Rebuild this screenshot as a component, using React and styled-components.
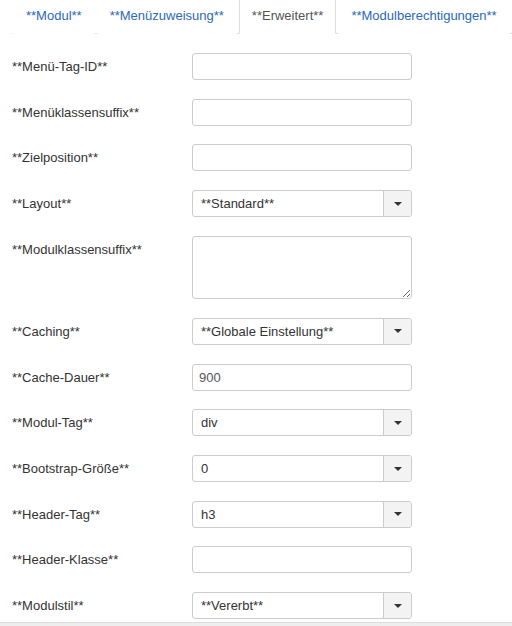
import React from "react";
import styled, { createGlobalStyle } from "styled-components";

const Global = createGlobalStyle`
  html, body {
    margin: 0;
    padding: 0;
    background: #fff;
    font-family: "Liberation Sans", Arial, sans-serif;
    font-size: 13px;
    color: #333;
    overflow: hidden;
  }
`;

const Page = styled.div`
  width: 512px;
  height: 626px;
  display: flex;
  flex-direction: column;
`;

const Tabs = styled.ul`
  display: flex;
  margin: 0 0 0 12px;
  padding: 0 0 0 1px;
  list-style: none;
  border-bottom: 1px solid #ddd;
  height: 33px;
  box-sizing: content-box;
`;

const Tab = styled.li`
  display: flex;
  align-items: center;
  padding: 0 12px 3px;
  margin-right: 2px;
  margin-bottom: -1px;
  height: 34px;
  box-sizing: border-box;
  color: ${(p) => (p.active ? "#555" : "#2a69b8")};
  background: #fff;
  border: 1px solid ${(p) => (p.active ? "#ddd" : "transparent")};
  border-top: none;
  border-bottom-color: ${(p) => (p.active ? "#fff" : "transparent")};
  white-space: nowrap;
`;

const Form = styled.div`
  flex: 1;
  padding: 19px 0 0 12px;
  display: flex;
  flex-direction: column;
  gap: 18.7px;
`;

const Row = styled.div`
  display: flex;
  align-items: ${(p) => (p.top ? "flex-start" : "center")};
`;

const Label = styled.label`
  width: 180px;
  line-height: 27px;
  color: #333;
`;

const Input = styled.input`
  box-sizing: border-box;
  width: 220px;
  height: 27px;
  padding: 0 6px;
  border: 1px solid #ccc;
  border-radius: 3px;
  font: inherit;
  color: #555;
  outline: none;
`;

const TextArea = styled.textarea`
  box-sizing: border-box;
  width: 220px;
  height: 63.5px;
  border: 1px solid #ccc;
  border-radius: 3px;
  font: inherit;
  outline: none;
`;

const Select = styled.div`
  box-sizing: border-box;
  width: 220px;
  height: 27px;
  display: flex;
  border: 1px solid #ccc;
  border-radius: 3px;
  color: #333;
  overflow: hidden;
`;

const SelectValue = styled.span`
  flex: 1;
  display: flex;
  align-items: center;
  padding-left: 8px;
`;

const Caret = styled.span`
  width: 27px;
  display: flex;
  align-items: center;
  justify-content: center;
  background: #f3f3f3;
  border-left: 1px solid #ccc;
  &::after {
    content: "";
    border-left: 4px solid transparent;
    border-right: 4px solid transparent;
    border-top: 4px solid #333;
  }
`;

const Footer = styled.div`
  height: 3px;
  background: #eee;
  border-top: 1px solid #ddd;
`;

const fields = [
  { label: "**Menü-Tag-ID**", type: "input" },
  { label: "**Menüklassensuffix**", type: "input" },
  { label: "**Zielposition**", type: "input" },
  { label: "**Layout**", type: "select", value: "**Standard**" },
  { label: "**Modulklassensuffix**", type: "textarea" },
  { label: "**Caching**", type: "select", value: "**Globale Einstellung**" },
  { label: "**Cache-Dauer**", type: "input", value: "900" },
  { label: "**Modul-Tag**", type: "select", value: "div" },
  { label: "**Bootstrap-Größe**", type: "select", value: "0" },
  { label: "**Header-Tag**", type: "select", value: "h3" },
  { label: "**Header-Klasse**", type: "input" },
  { label: "**Modulstil**", type: "select", value: "**Vererbt**" },
];

const Field = ({ type, value }) => {
  if (type === "select")
    return (
      <Select>
        <SelectValue>{value}</SelectValue>
        <Caret />
      </Select>
    );
  if (type === "textarea") return <TextArea />;
  return <Input defaultValue={value || ""} />;
};

export default function App() {
  return (
    <Page>
      <Global />
      <Tabs>
        <Tab>**Modul**</Tab>
        <Tab>**Menüzuweisung**</Tab>
        <Tab active>**Erweitert**</Tab>
        <Tab>**Modulberechtigungen**</Tab>
      </Tabs>
      <Form>
        {fields.map((f) => (
          <Row key={f.label} top={f.type === "textarea"}>
            <Label>{f.label}</Label>
            <Field {...f} />
          </Row>
        ))}
      </Form>
      <Footer />
    </Page>
  );
}
